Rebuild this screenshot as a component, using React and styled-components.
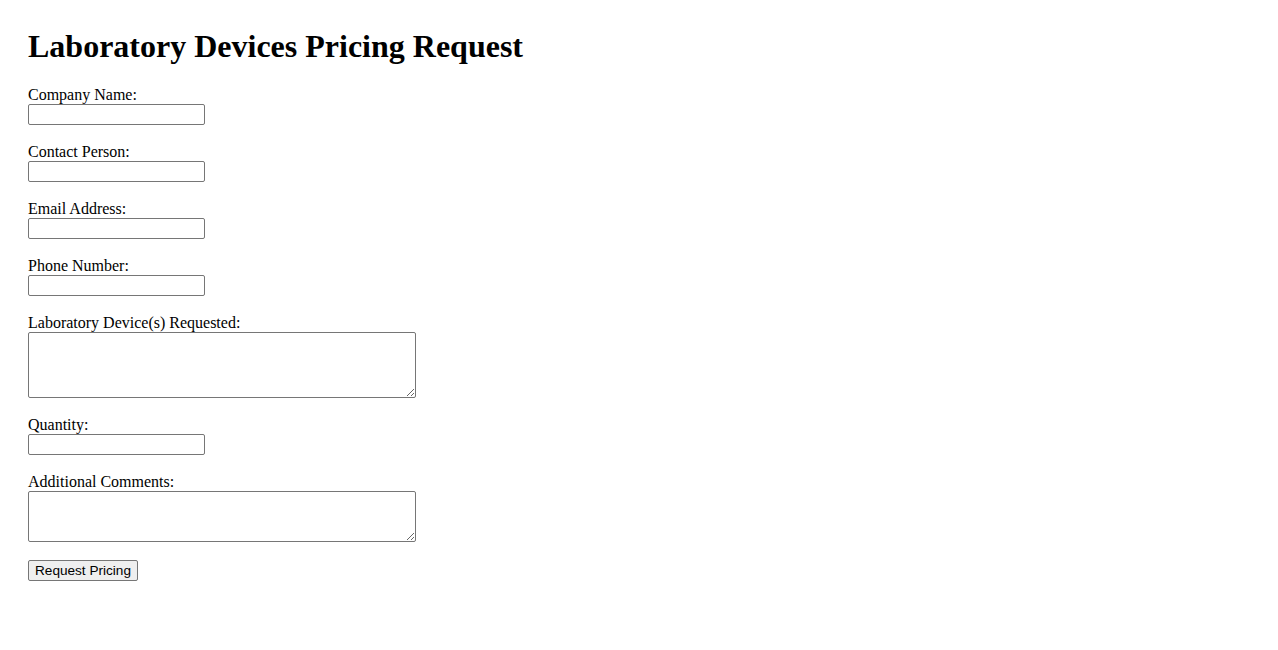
import React from "react";
import styled, { createGlobalStyle } from "styled-components";

const Global = createGlobalStyle`
  html, body { margin: 0; padding: 0; background: #ffffff; }
  body { font-family: "Liberation Serif", "Times New Roman", serif; color: #000; }
`;

const Page = styled.div`
  padding: 28px;
`;

const Title = styled.h1`
  margin: 0 0 21px;
  font-size: 32px;
  line-height: 37px;
  font-weight: bold;
  font-family: "Liberation Serif", "Times New Roman", serif;
`;

const Form = styled.form`
  display: flex;
  flex-direction: column;
  align-items: flex-start;
  gap: 18px;
`;

const Field = styled.div`
  display: flex;
  flex-direction: column;
  align-items: flex-start;
`;

const Label = styled.label`
  font-size: 16px;
  line-height: 18px;
  height: 18px;
`;

const Input = styled.input`
  box-sizing: border-box;
  width: 177px;
  height: 21px;
  margin: 0;
  padding: 1px 2px;
  border: 1px solid #767676;
  border-radius: 2px;
  background: #fff;
  font-family: "Liberation Sans", Arial, sans-serif;
  font-size: 13.33px;
`;

const TextArea = styled.textarea`
  box-sizing: border-box;
  width: 388px;
  height: ${(p) => p.$h}px;
  margin: 0;
  padding: 2px;
  border: 1px solid #767676;
  border-radius: 2px;
  background: #fff;
  font-family: "Liberation Mono", monospace;
  font-size: 13.33px;
  display: block;
`;

const Button = styled.button`
  box-sizing: border-box;
  width: 110px;
  height: 21px;
  padding: 1px 6px;
  margin: 0;
  border: 1px solid #767676;
  border-radius: 2px;
  background: #efefef;
  color: #000;
  font-family: "Liberation Sans", Arial, sans-serif;
  font-size: 13.6px;
  line-height: 17px;
  white-space: nowrap;
`;

const fields = [
  { id: "company", label: "Company Name:" },
  { id: "contact", label: "Contact Person:" },
  { id: "email", label: "Email Address:", type: "email" },
  { id: "phone", label: "Phone Number:", type: "tel" },
  { id: "devices", label: "Laboratory Device(s) Requested:", area: 66 },
  { id: "qty", label: "Quantity:" },
  { id: "comments", label: "Additional Comments:", area: 51 },
];

export default function App() {
  return (
    <>
      <Global />
      <Page>
        <Title>Laboratory Devices Pricing Request</Title>
        <Form onSubmit={(e) => e.preventDefault()}>
          {fields.map((f) => (
            <Field key={f.id}>
              <Label htmlFor={f.id}>{f.label}</Label>
              {f.area ? (
                <TextArea id={f.id} $h={f.area} />
              ) : (
                <Input id={f.id} type={f.type || "text"} />
              )}
            </Field>
          ))}
          <Button type="submit">Request Pricing</Button>
        </Form>
      </Page>
    </>
  );
}
